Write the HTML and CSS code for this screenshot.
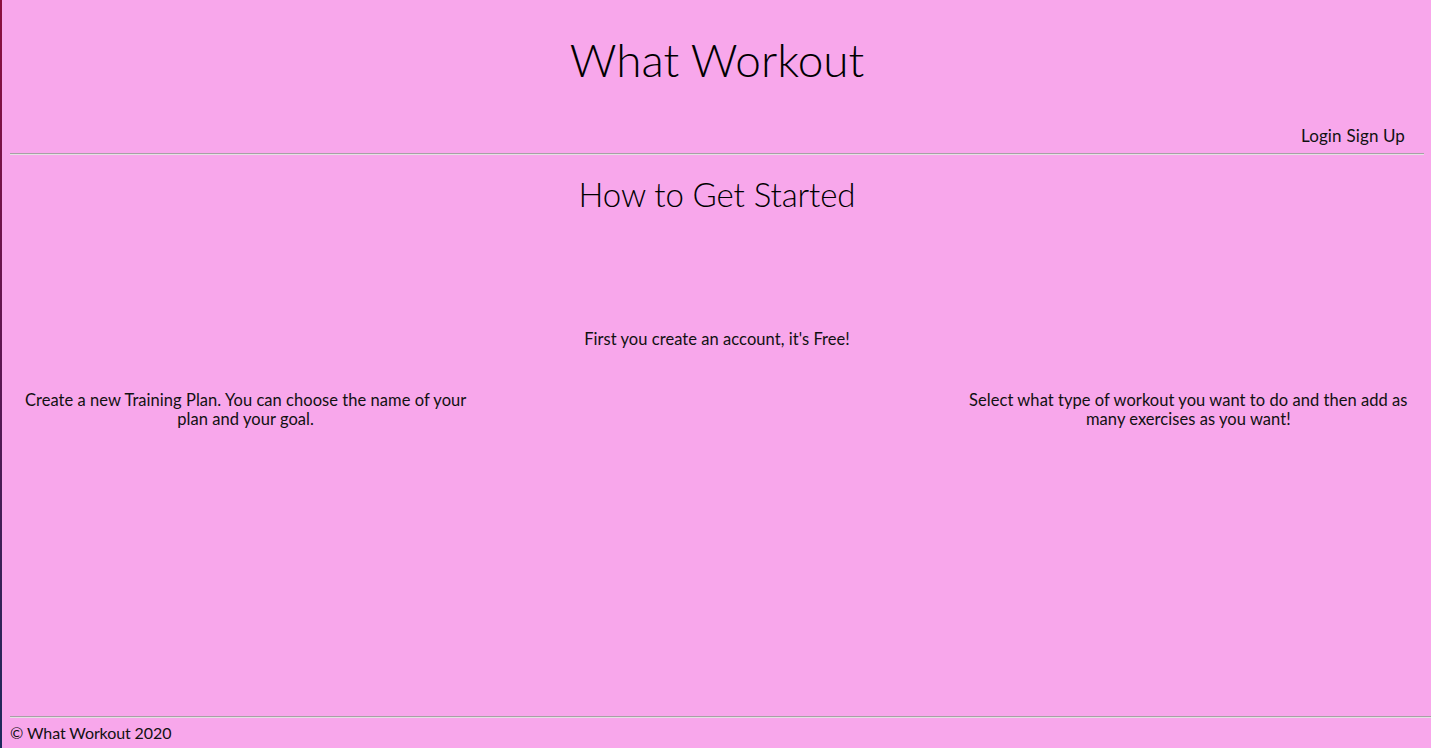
FILE: index.html
```html
<!DOCTYPE html>
<html lang="en">
<head>
<meta charset="utf-8">
<title>What Workout</title>
<link rel="stylesheet" href="styles.css">
</head>
<body>
<div class="page">
  <header class="site-header">
    <h1 class="brand">What Workout</h1>
    <nav class="auth-nav">
      <a class="auth-link" href="#">Login</a>
      <a class="auth-link" href="#">Sign Up</a>
    </nav>
  </header>
  <hr class="rule">
  <main class="main">
    <h2 class="section-title">How to Get Started</h2>
    <div class="steps">
      <div class="step step-low">
        <p>Create a new Training Plan. You can choose the name of your plan and your goal.</p>
      </div>
      <div class="step step-high">
        <p>First you create an account, it's Free!</p>
      </div>
      <div class="step step-low">
        <p>Select what type of workout you want to do and then add as many exercises as you want!</p>
      </div>
    </div>
  </main>
  <footer class="site-footer">
    <hr class="rule rule-full">
    <p class="copy">© What Workout 2020</p>
  </footer>
</div>
</body>
</html>
```

FILE: styles.css
```css
html, body {
  margin: 0;
  padding: 0;
  height: 100%;
}
body {
  background: #f8a7eb;
  font-family: "Lato", "Open Sans", sans-serif;
  color: #000;
  border-left: 2px solid #5a1a4c;
  border-image: linear-gradient(to bottom, #8c0f3e, #5b1752 50%, #1b2a5c) 1;
  overflow: hidden;
}
.page {
  min-height: 748px;
  display: flex;
  flex-direction: column;
  padding: 0 7px 0 8px;
  box-sizing: border-box;
}
.site-header {
  display: flex;
  flex-direction: column;
}
.brand {
  margin: 33px 0 0;
  text-align: center;
  font-weight: 300;
  font-size: 46px;
  line-height: 54px;
}
.auth-nav {
  display: flex;
  justify-content: flex-end;
  gap: 5px;
  margin-top: 39px;
  padding-right: 19px;
  font-size: 17px;
  line-height: 20px;
  letter-spacing: 0.1px;
  color: #111;
}
.auth-link {
  color: #111;
  text-decoration: none;
}
.rule {
  border: 0;
  border-top: 1px solid #a8a0a6;
  border-bottom: 1px solid #e6e0e4;
  margin: 7px 0 0;
  height: 0;
}
.main {
  flex: 1;
  display: flex;
  flex-direction: column;
}
.section-title {
  margin: 20px 0 0;
  text-align: center;
  font-weight: 300;
  font-size: 33px;
  line-height: 38px;
  letter-spacing: -0.1px;
}
.steps {
  display: grid;
  grid-template-columns: repeat(3, 1fr);
}
.step {
  text-align: center;
  font-size: 16.5px;
  line-height: 19px;
  letter-spacing: 0.05px;
  padding: 0 8px;
  color: #111;
}
.step p {
  margin: 0;
}
.step-high {
  padding-top: 117px;
}
.step-low {
  padding-top: 178px;
}
.site-footer {
  margin-right: -7px;
}
.rule-full {
  margin: 0;
}
.copy {
  margin: 5px 0 6px 0;
  font-size: 16px;
  line-height: 19px;
  letter-spacing: -0.1px;
  color: #111;
}
```
